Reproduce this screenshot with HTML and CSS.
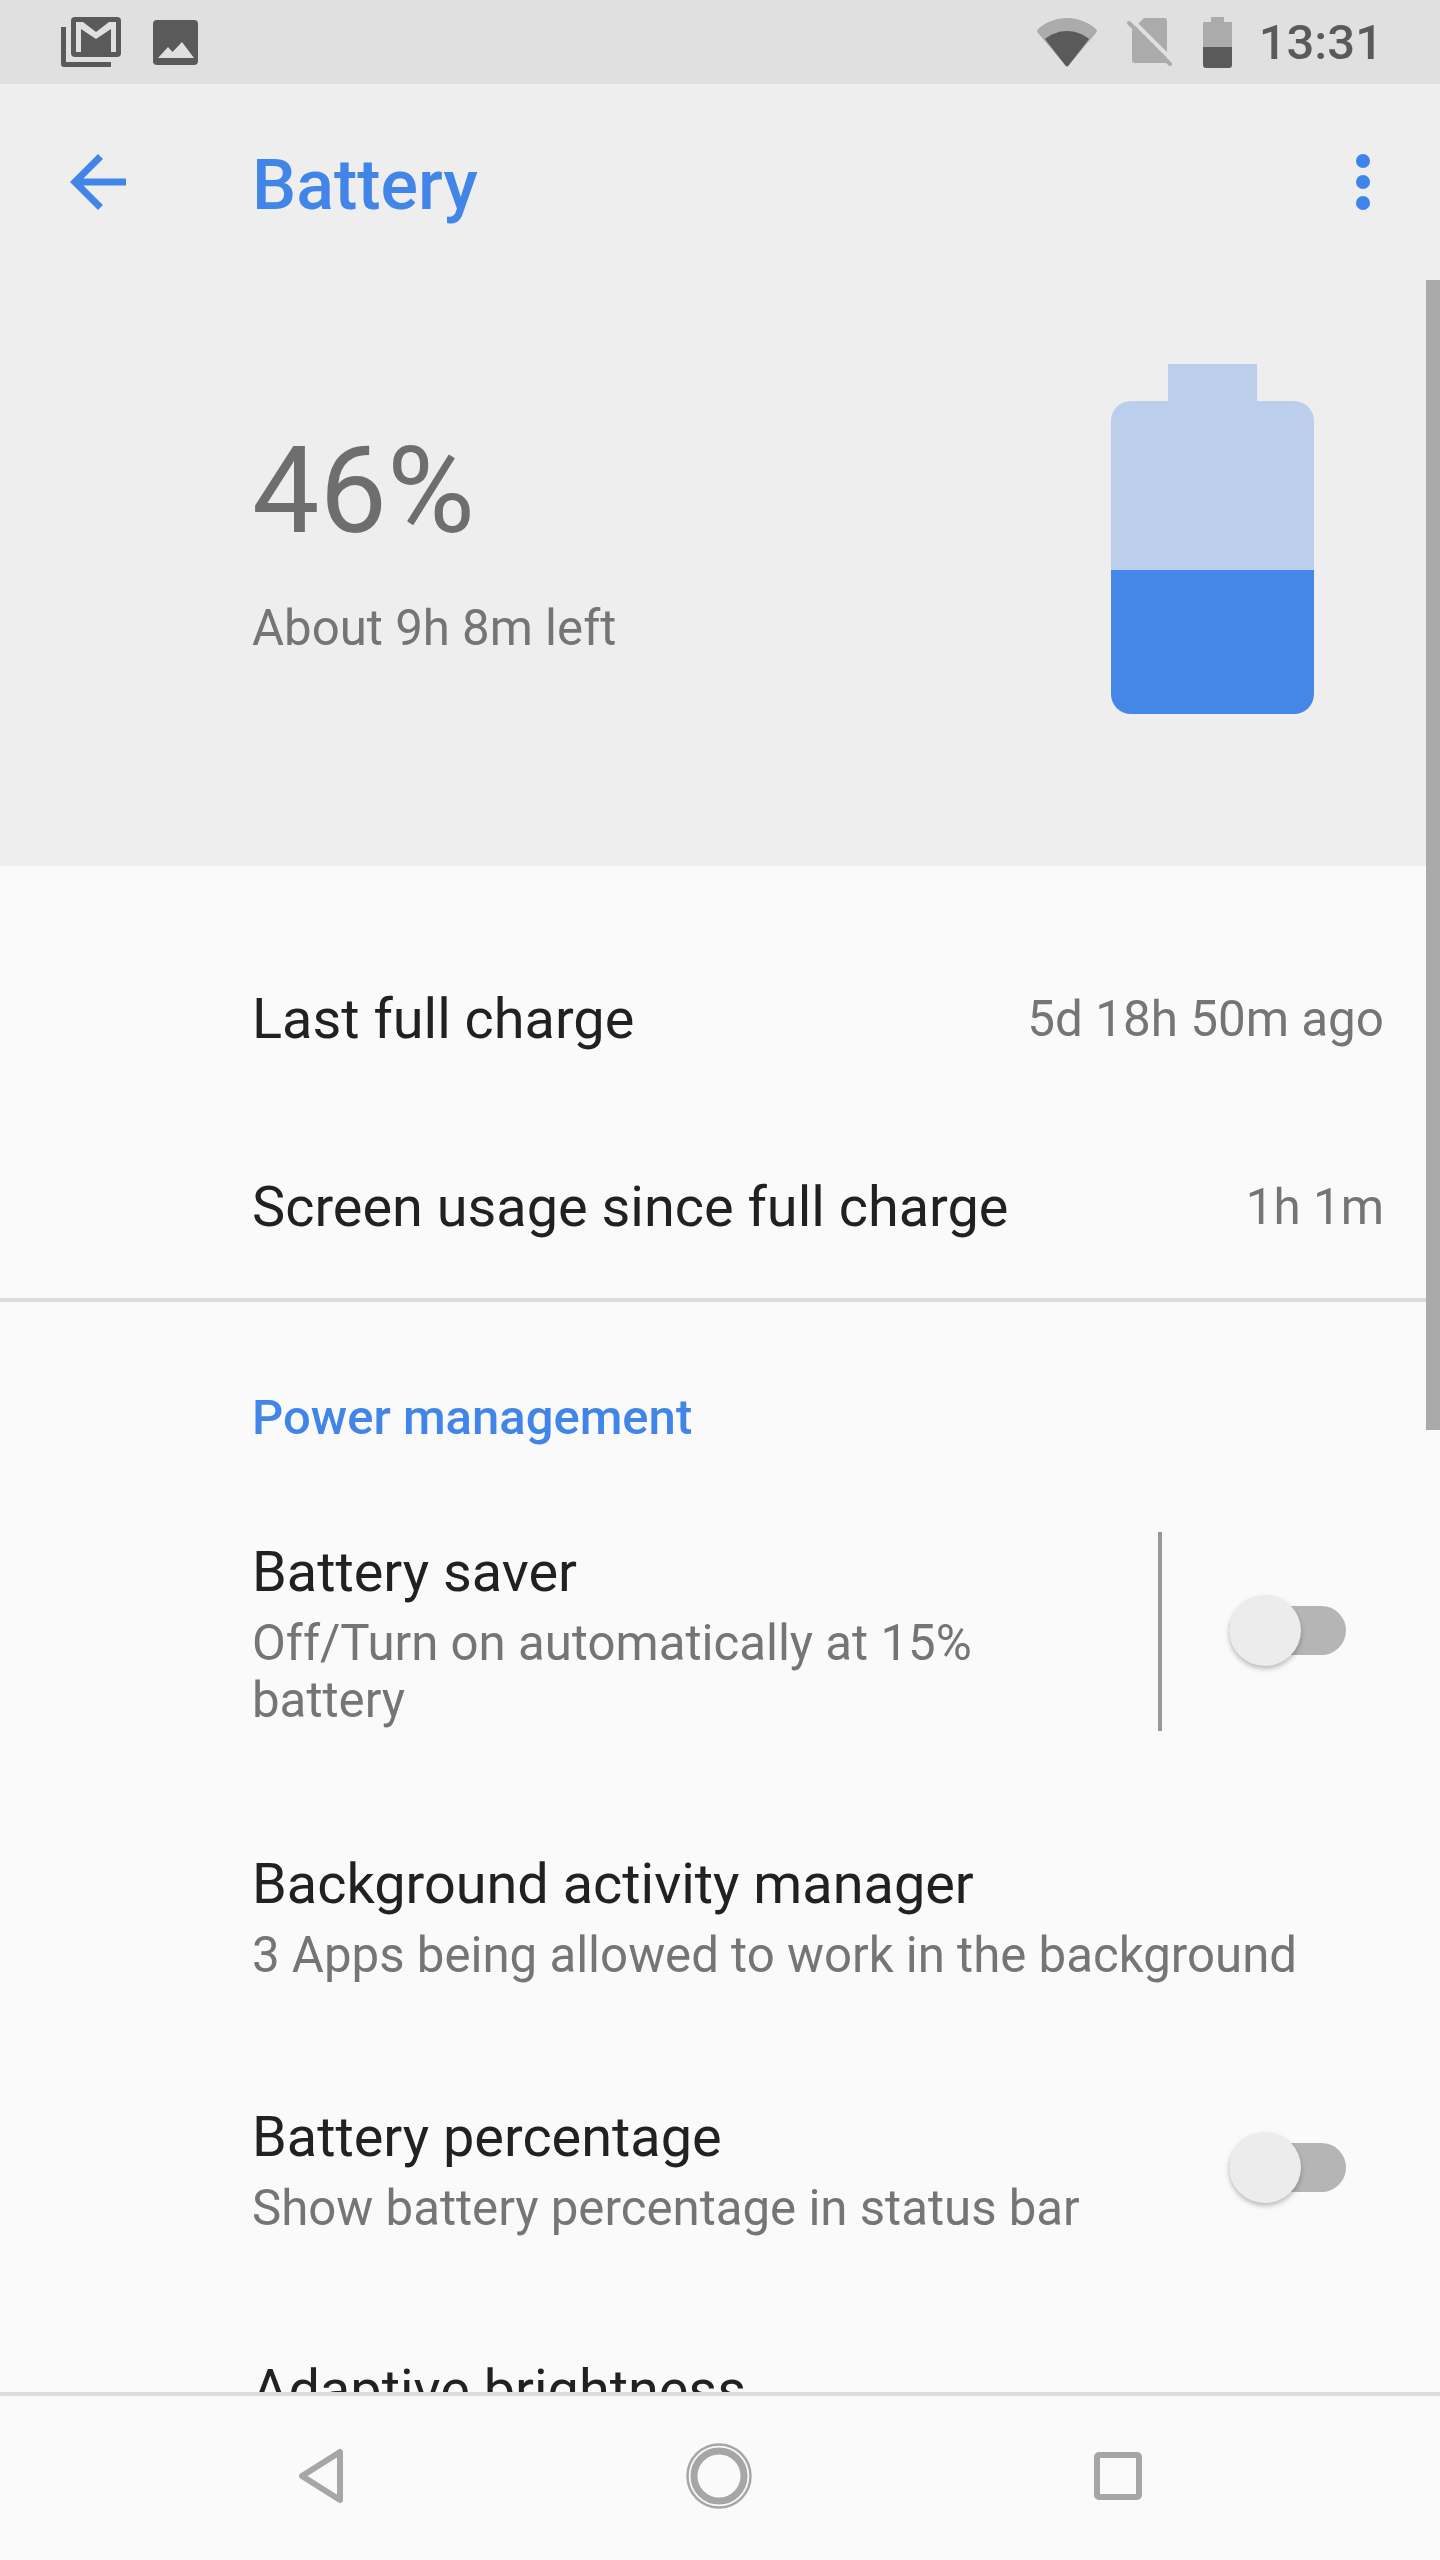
FILE: index.html
```html
<!doctype html>
<html>
  <head>
    <title>Battery</title>
    <link rel="stylesheet" href="styles.css">
  </head>
  <body>
    <div class="status-bar">
      <div class="status-left">
        <svg viewBox="0 0 60 50" width="60" height="50">
          <path d="M0 10h5v35h45v5H3a3 3 0 0 1-3-3z" fill="#5a5a5a"/>
          <rect x="10" y="0" width="50" height="40" rx="4" fill="#5a5a5a"/>
          <path d="M15 35V5h7l13 10 13-10h7v30h-5V12L35 22 20 12v23z" fill="#e0e0e0"/>
        </svg>
        <svg viewBox="0 0 45 45" width="45" height="45">
          <rect width="45" height="45" rx="4" fill="#5a5a5a"/>
          <path d="M5 38l10-11 4.500 5L29 22l12 16z" fill="#e0e0e0"/>
        </svg>
      </div>
      <div class="status-right">
        <svg viewBox="0 0 60 49" width="60" height="49">
          <path d="M28.500 47.500L1 15a3 3 0 0 1 0-4C9 4 19 0 30 0s21 4 29 11a3 3 0 0 1 0 4L31.500 47.500a2 2 0 0 1-3 0z" fill="#ababab"/>
          <path d="M28.500 47.500L8 21c6-5 14-8 22-8s16 3 22 8L31.500 47.500a2 2 0 0 1-3 0z" fill="#5a5a5a"/>
        </svg>
        <svg class="ic-sim" viewBox="0 0 46 48" width="46" height="48">
          <path d="M17 0h20a3 3 0 0 1 3 3v39a3 3 0 0 1-3 3H8a3 3 0 0 1-3-3V12z" fill="#ababab"/>
          <path d="M5 2l38 38" stroke="#e0e0e0" stroke-width="4" fill="none"/>
          <path d="M2 5l41 41" stroke="#ababab" stroke-width="4" stroke-linecap="round" fill="none"/>
        </svg>
        <svg class="ic-batt" viewBox="0 0 29 51" width="29" height="51">
          <path d="M8 0h13v5h7a1 1 0 0 1 1 1v25H0V6a1 1 0 0 1 1-1h7z" fill="#ababab"/>
          <path d="M0 30h29v18a3 3 0 0 1-3 3H3a3 3 0 0 1-3-3z" fill="#5a5a5a"/>
        </svg>
        <span class="clock">13:31</span>
      </div>
    </div>

    <main class="screen">
      <div class="scrollbar"></div>

      <header class="toolbar">
        <svg viewBox="0 0 56 56" width="56" height="56">
          <path d="M56 24.500H13.400L33 4.900 28 0 0 28l28 28 4.900-4.900L13.400 31.500H56z" fill="#4285e8"/>
        </svg>
        <h1>Battery</h1>
        <div class="more"><i></i><i></i><i></i></div>
      </header>

      <section class="hero">
        <div class="hero-text">
          <div class="percent">46%</div>
          <div class="left">About 9h 8m left</div>
        </div>
        <div class="big-batt">
          <div class="batt-tip"></div>
          <div class="batt-empty"></div>
          <div class="batt-full"></div>
        </div>
      </section>

      <section class="usage">
        <div class="usage-row">
          <span class="title">Last full charge</span>
          <span class="value">5d 18h 50m ago</span>
        </div>
        <div class="usage-row">
          <span class="title">Screen usage since full charge</span>
          <span class="value">1h 1m</span>
        </div>
      </section>

      <section class="power">
        <h2>Power management</h2>

        <div class="pref pref-saver">
          <div class="pref-text">
            <div class="title">Battery saver</div>
            <div class="summary">Off/Turn on automatically at 15%<br>battery</div>
          </div>
          <div class="pref-sep"></div>
          <div class="switch"><div class="thumb"></div></div>
        </div>

        <div class="pref pref-bg">
          <div class="pref-text">
            <div class="title">Background activity manager</div>
            <div class="summary">3 Apps being allowed to work in the background</div>
          </div>
        </div>

        <div class="pref pref-pct">
          <div class="pref-text">
            <div class="title">Battery percentage</div>
            <div class="summary">Show battery percentage in status bar</div>
          </div>
          <div class="switch"><div class="thumb"></div></div>
        </div>

        <div class="pref pref-adaptive">
          <div class="pref-text">
            <div class="title">Adaptive brightness</div>
          </div>
        </div>
      </section>
    </main>

    <nav class="nav-bar">
      <svg viewBox="0 0 48 56" width="48" height="56">
        <path d="M44 4v48L6 28z" fill="none" stroke="#a6a6a6" stroke-width="6" stroke-linejoin="round"/>
      </svg>
      <svg viewBox="0 0 66 66" width="66" height="66">
        <circle cx="33" cy="33" r="31.500" fill="none" stroke="#a6a6a6" stroke-width="2.500"/>
        <circle cx="33" cy="33" r="25" fill="none" stroke="#a6a6a6" stroke-width="7"/>
      </svg>
      <svg viewBox="0 0 48 48" width="48" height="48">
        <rect x="3" y="3" width="42" height="42" rx="2" fill="none" stroke="#a6a6a6" stroke-width="6"/>
      </svg>
    </nav>
  </body>
</html>
```
FILE: styles.css
```css
* {
  box-sizing: border-box;
}

html,
body {
  margin: 0;
  padding: 0;
}

body {
  width: 1440px;
  height: 2560px;
  overflow: hidden;
  font-family: Roboto, sans-serif;
  background-color: #fafafa;
  display: flex;
  flex-direction: column;
}

.status-bar {
  height: 84px;
  flex: none;
  background-color: #e0e0e0;
  display: flex;
  justify-content: space-between;
  align-items: center;
  padding: 0 57px 0 61px;
}

.status-left,
.status-right {
  display: flex;
  align-items: center;
}

.status-left {
  gap: 32px;
}

.status-right .ic-sim {
  margin-left: 30px;
}

.status-right .ic-batt {
  margin-left: 30px;
}

.clock {
  margin-left: 27px;
  font-size: 49px;
  font-weight: 500;
  color: #5a5a5a;
}

.screen {
  position: relative;
  height: 2312px;
  flex: none;
  overflow: hidden;
  border-bottom: 4px solid #dcdcdc;
}

.scrollbar {
  position: absolute;
  top: 196px;
  right: 0;
  width: 14px;
  height: 1150px;
  background-color: #aaaaaa;
  z-index: 2;
}

.toolbar {
  height: 196px;
  background-color: #eeeeee;
  display: flex;
  align-items: center;
  padding: 0 70px 0 70px;
}

.toolbar h1 {
  margin: 6px 0 0 126px;
  font-size: 70px;
  font-weight: 500;
  color: #4285e8;
  flex: 1;
}

.more {
  display: flex;
  flex-direction: column;
  gap: 7px;
}

.more i {
  display: block;
  width: 14px;
  height: 14px;
  border-radius: 50%;
  background-color: #3f84ea;
}

.hero {
  height: 586px;
  background-color: #eeeeee;
  display: flex;
  justify-content: space-between;
  padding: 84px 126px 0 252px;
}

.hero-text {
  padding-top: 53px;
}

.percent {
  font-size: 120px;
  line-height: 148px;
  color: #6e6e6e;
}

.left {
  margin-top: 30px;
  font-size: 49.2px;
  line-height: 66px;
  color: #757575;
}

.big-batt {
  width: 203px;
  display: flex;
  flex-direction: column;
  align-items: center;
}

.batt-tip {
  width: 89px;
  height: 37px;
  background-color: #bbcfed;
}

.batt-empty {
  width: 100%;
  height: 169px;
  border-radius: 20px 20px 0 0;
  background-color: #bbcfed;
}

.batt-full {
  width: 100%;
  height: 144px;
  border-radius: 0 0 20px 20px;
  background-color: #4587e7;
}

.title {
  font-size: 55.85px;
  color: #212121;
}

.value {
  font-size: 49.4px;
  color: #757575;
}

.summary {
  margin-top: 8px;
  font-size: 49.2px;
  line-height: 57px;
  color: #757575;
}

.usage {
  padding: 59px 56px 0 252px;
  border-bottom: 4px solid #dcdcdc;
  height: 436px;
}

.usage-row {
  height: 188px;
  display: flex;
  justify-content: space-between;
  align-items: center;
}

.power {
  padding-left: 252px;
}

.power h2 {
  margin: 0;
  padding-top: 86px;
  font-size: 49px;
  line-height: 60px;
  font-weight: 500;
  color: #4285e8;
}

.pref {
  display: flex;
  align-items: center;
}

.pref-text {
  flex: 1;
}

.pref .title {
  line-height: 70px;
}

.pref-saver {
  margin-top: 83px;
  height: 200px;
}

.pref-saver .pref-text {
  padding-top: 4px;
}

.pref-bg {
  margin-top: 118px;
}

.pref-pct {
  margin-top: 118px;
}

.pref-adaptive {
  margin-top: 118px;
}

.pref-sep {
  width: 4px;
  height: 199px;
  margin-right: 67px;
  background-color: #999999;
}

.switch {
  position: relative;
  width: 117px;
  height: 49px;
  margin-right: 94px;
  margin-bottom: 2px;
  border-radius: 25px;
  background-color: #b5b5b5;
}

.pref-pct .switch {
  margin-bottom: 4px;
}

.thumb {
  position: absolute;
  left: 0;
  top: -11px;
  width: 72px;
  height: 71px;
  border-radius: 50%;
  background-color: #ececec;
  box-shadow: 0 3px 5px rgba(0, 0, 0, 0.25);
}

.nav-bar {
  flex: 1;
  display: flex;
  align-items: center;
  padding: 0 0 4px 296px;
  gap: 342px;
}
```
